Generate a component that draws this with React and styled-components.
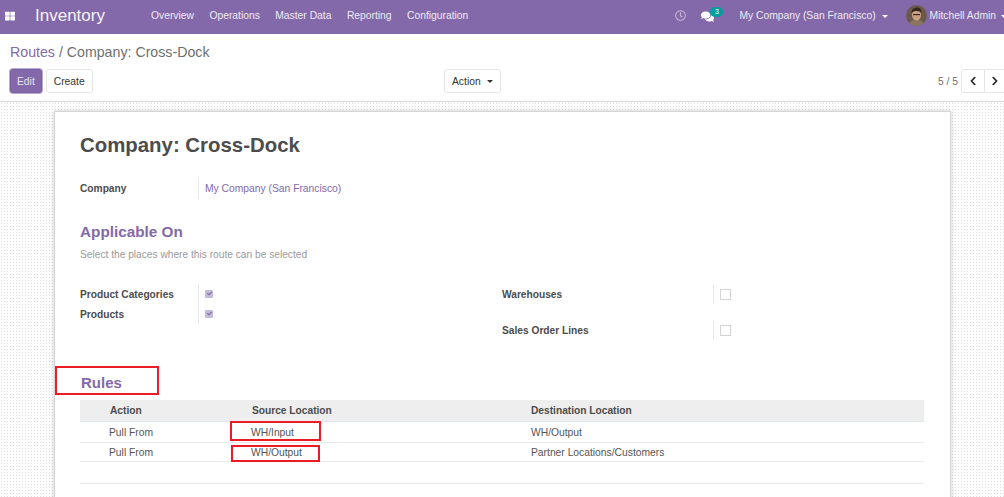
import React from "react";
import styled, { createGlobalStyle } from "styled-components";
import { FaThLarge, FaComments, FaRegClock, FaChevronLeft, FaChevronRight, FaCheck } from "react-icons/fa";

const Global = createGlobalStyle`
  html, body { margin: 0; padding: 0; height: 100%; overflow: hidden; }
  body { font-family: "Liberation Sans", Arial, sans-serif; font-size: 10.3px; color: #4c4c4c; background: #fff; }
  * { box-sizing: border-box; }
`;

const Page = styled.div`
  position: relative;
  width: 1004px;
  height: 497px;
  overflow: hidden;
  display: flex;
  flex-direction: column;
`;

const Navbar = styled.header`
  height: 34px;
  flex: none;
  background: #8369a9;
  color: #fff;
  display: flex;
  align-items: center;
  padding: 0 0 3px 5px;
`;
const Apps = styled.span`
  width: 30px;
  display: flex;
  color: #fff;
  font-size: 10px;
`;
const Brand = styled.span`
  font-size: 17px;
  width: 116px;
  color: #f6f3fa;
`;
const Menu = styled.nav`
  display: flex;
  gap: 15.5px;
  flex: 1;
`;
const NavLink = styled.span`
  font-size: 10.3px;
  color: #eee9f4;
`;
const Systray = styled.div`
  display: flex;
  align-items: center;
  margin-right: -3px;
`;
const Clock = styled.span`
  display: flex;
  font-size: 11px;
  color: #c4b6d8;
  margin-right: 15px;
`;
const Chat = styled.span`
  position: relative;
  display: flex;
  font-size: 13px;
  color: #fff;
  margin: 2px 25px 0 0;
`;
const Badge = styled.span`
  position: absolute;
  left: 9px;
  top: -3px;
  width: 13px;
  height: 10px;
  border-radius: 5px;
  background: #00a09d;
  color: #fff;
  font-size: 7px;
  line-height: 10px;
  text-align: center;
`;
const Caret = styled.span`
  display: inline-block;
  width: 0;
  height: 0;
  border-left: 3.5px solid transparent;
  border-right: 3.5px solid transparent;
  border-top: 3.5px solid ${p => p.$color || "#fff"};
  margin-left: ${p => p.$gap || 6}px;
  vertical-align: middle;
`;
const Company = styled.span`
  font-size: 10.3px;
  color: #eee9f4;
  margin-right: 18px;
  white-space: nowrap;
`;
const UserName = styled.span`
  font-size: 10.3px;
  color: #eee9f4;
  margin-left: 3px;
  white-space: nowrap;
`;
const Avatar = styled.svg`
  width: 21px;
  height: 21px;
  border-radius: 50%;
  flex: none;
`;

const ControlPanel = styled.div`
  height: 68px;
  flex: none;
  background: #fff;
  border-bottom: 1px solid #d9d7d7;
  padding: 9px 9px 0 10px;
`;
const Breadcrumb = styled.div`
  font-size: 14.2px;
  line-height: 18px;
  color: #6f6f6f;
  height: 26px;
`;
const Crumb = styled.span`
  color: #8369a9;
`;
const Buttons = styled.div`
  display: grid;
  grid-template-columns: 434px auto 1fr;
  align-items: center;
`;
const ButtonGroup = styled.div`
  display: flex;
  gap: 4px;
`;
const Button = styled.button`
  height: 24px;
  padding: 0 ${p => (p.$primary ? 6 : 7)}px;
  font: inherit;
  font-size: 10.3px;
  border-radius: 3px;
  border: 1px solid ${p => (p.$primary ? "#7c60a3" : "#e6e6e6")};
  background: ${p => (p.$primary ? "#8369a9" : "#fff")};
  color: ${p => (p.$primary ? "#e9e3f1" : "#333")};
  box-shadow: ${p => (p.$primary ? "0 0 0 1px #b9abd0" : "none")};
`;
const Pager = styled.div`
  display: flex;
  align-items: center;
  justify-content: flex-end;
  margin-right: -9px;
`;
const PagerText = styled.span`
  font-size: 10.3px;
  color: #6f6f6f;
  margin-right: 3px;
`;
const PagerBtn = styled.span`
  width: ${p => (p.$first ? 24 : 19)}px;
  height: 24px;
  display: flex;
  align-items: center;
  justify-content: center;
  border: 1px solid #e6e6e6;
  border-right-width: ${p => (p.$first ? 1 : 0)}px;
  border-left-width: ${p => (p.$first ? 1 : 0)}px;
  border-radius: ${p => (p.$first ? "3px 0 0 3px" : "0")};
  color: #212529;
  font-size: 10px;
`;

const Content = styled.main`
  flex: 1;
  min-height: 0;
  padding: 9px 53px 0 54px;
  background-color: #fff;
  background-image: radial-gradient(#dcdcdc 0.6px, transparent 0.7px);
  background-size: 3px 3px;
`;
const Sheet = styled.section`
  height: 500px;
  background: #fff;
  border: 1px solid #d5d5d5;
  border-bottom: 0;
  box-shadow: 0 0 5px rgba(0, 0, 0, 0.2);
  padding: 20px 26px 0 25px;
`;
const Title = styled.h1`
  margin: 0;
  font-size: 20.4px;
  line-height: 27px;
  font-weight: 700;
  color: #4c4c4c;
`;
const CompanyRow = styled.div`
  display: flex;
  align-items: stretch;
  margin-top: 19px;
  height: 21px;
`;
const Label = styled.span`
  font-weight: 700;
  font-size: 10.2px;
  color: #4c4c4c;
  width: ${p => p.$w || 118}px;
  flex: none;
  display: flex;
  align-items: center;
`;
const Value = styled.span`
  border-left: 1px solid #e9e9e9;
  padding-left: 6px;
  display: flex;
  align-items: center;
  color: #8369a9;
  font-size: 10.3px;
`;
const SectionTitle = styled.h2`
  margin: 0;
  font-size: ${p => p.$size}px;
  line-height: 20px;
  font-weight: 700;
  color: #8369a9;
  margin-top: ${p => p.$top}px;
  padding-left: ${p => p.$indent || 0}px;
`;
const Hint = styled.p`
  margin: 6px 0 0;
  font-size: 10.2px;
  line-height: 14px;
  color: #9a9a9a;
`;
const Groups = styled.div`
  display: grid;
  grid-template-columns: 422px 1fr;
  margin-top: 22px;
`;
const Column = styled.div`
  display: flex;
  flex-direction: column;
  gap: ${p => p.$gap}px;
  padding-top: ${p => p.$top || 0}px;
`;
const Field = styled.div`
  display: flex;
  height: ${p => p.$h}px;
`;
const CheckCell = styled.span`
  border-left: 1px solid #e9e9e9;
  display: flex;
  align-items: center;
  padding-left: ${p => p.$pad}px;
`;
const CheckedBox = styled.span`
  width: 8px;
  height: 8px;
  margin-bottom: 2px;
  border-radius: 1px;
  background: #c5bbd8;
  color: #7a6499;
  font-size: 5px;
  display: flex;
  align-items: center;
  justify-content: center;
`;
const EmptyBox = styled.span`
  width: 11px;
  height: 11px;
  border: 1px solid #d4d4d4;
`;
const Table = styled.table`
  width: 844px;
  margin-top: 7px;
  border-collapse: collapse;
  table-layout: fixed;
  font-size: 10.3px;
`;
const Th = styled.th`
  background: #eeeeee;
  height: 21px;
  padding: 0 0 0 ${p => p.$pad || 0}px;
  text-align: left;
  font-size: 10.2px;
  font-weight: 700;
  color: #4c4c4c;
  border-bottom: 1px solid #dfe6ee;
`;
const Td = styled.td`
  padding: 2px 0 0 ${p => p.$pad || 0}px;
  height: ${p => p.$h}px;
  border-bottom: 1px solid #e9e9e9;
  color: #555;
`;
const RedBox = styled.div`
  position: absolute;
  border: 2px solid #ed1c24;
`;

const rules = [
  { action: "Pull From", source: "WH/Input", dest: "WH/Output", h: 21 },
  { action: "Pull From", source: "WH/Output", dest: "Partner Locations/Customers", h: 19 },
];

const navItems = ["Overview", "Operations", "Master Data", "Reporting", "Configuration"];

export default function App() {
  return (
    <Page>
      <Global />
      <Navbar>
        <Apps><FaThLarge /></Apps>
        <Brand>Inventory</Brand>
        <Menu>
          {navItems.map(n => <NavLink key={n}>{n}</NavLink>)}
        </Menu>
        <Systray>
          <Clock><FaRegClock /></Clock>
          <Chat>
            <FaComments />
            <Badge>3</Badge>
          </Chat>
          <Company>My Company (San Francisco)<Caret /></Company>
          <Avatar viewBox="0 0 21 21">
            <rect width="21" height="21" fill="#6b5a4c" />
            <path d="M2 21c1-5 5-6 8.500-6s7.500 1 8.500 6z" fill="#8a7560" />
            <ellipse cx="10.500" cy="10" rx="4.500" ry="5.500" fill="#c99f80" />
            <path d="M5.500 8c0-4 3-5.500 5.500-5.500S16 4.500 15.500 8c-1.500-2-7-3-10 0z" fill="#35261d" />
            <rect x="7" y="9" width="7" height="1.200" fill="#3a2c24" />
          </Avatar>
          <UserName>Mitchell Admin<Caret $gap={5} /></UserName>
        </Systray>
      </Navbar>
      <ControlPanel>
        <Breadcrumb><Crumb>Routes</Crumb> / Company: Cross-Dock</Breadcrumb>
        <Buttons>
          <ButtonGroup>
            <Button $primary>Edit</Button>
            <Button>Create</Button>
          </ButtonGroup>
          <Button>Action<Caret $color="#333" /></Button>
          <Pager>
            <PagerText>5 / 5</PagerText>
            <PagerBtn $first><FaChevronLeft /></PagerBtn>
            <PagerBtn><FaChevronRight /></PagerBtn>
          </Pager>
        </Buttons>
      </ControlPanel>
      <Content>
        <Sheet>
          <Title>Company: Cross-Dock</Title>
          <CompanyRow>
            <Label>Company</Label>
            <Value>My Company (San Francisco)</Value>
          </CompanyRow>
          <SectionTitle $top={23} $size={15.3}>Applicable On</SectionTitle>
          <Hint>Select the places where this route can be selected</Hint>
          <Groups>
            <Column $gap={0}>
              <Field $h={21}>
                <Label>Product Categories</Label>
                <CheckCell $pad={6}><CheckedBox><FaCheck /></CheckedBox></CheckCell>
              </Field>
              <Field $h={19}>
                <Label>Products</Label>
                <CheckCell $pad={6}><CheckedBox><FaCheck /></CheckedBox></CheckCell>
              </Field>
            </Column>
            <Column $gap={17} $top={1}>
              <Field $h={19}>
                <Label $w={211}>Warehouses</Label>
                <CheckCell $pad={6}><EmptyBox /></CheckCell>
              </Field>
              <Field $h={19}>
                <Label $w={211}>Sales Order Lines</Label>
                <CheckCell $pad={6}><EmptyBox /></CheckCell>
              </Field>
            </Column>
          </Groups>
          <SectionTitle $top={33} $size={15} $indent={1}>Rules</SectionTitle>
          <Table>
            <colgroup>
              <col style={{ width: 171 }} />
              <col style={{ width: 280 }} />
              <col />
            </colgroup>
            <thead>
              <tr>
                <Th $pad={30}>Action</Th>
                <Th $pad={1}>Source Location</Th>
                <Th>Destination Location</Th>
              </tr>
            </thead>
            <tbody>
              {rules.map(r => (
                <tr key={r.source}>
                  <Td $h={r.h} $pad={29}>{r.action}</Td>
                  <Td $h={r.h}>{r.source}</Td>
                  <Td $h={r.h}>{r.dest}</Td>
                </tr>
              ))}
              <tr><Td $h={22} colSpan={3} /></tr>
            </tbody>
          </Table>
        </Sheet>
      </Content>
      <RedBox style={{ left: 230, top: 421, width: 91, height: 20 }} />
      <RedBox style={{ left: 231, top: 445, width: 89, height: 17 }} />
      <RedBox style={{ left: 55, top: 366, width: 104, height: 29 }} />
    </Page>
  );
}
